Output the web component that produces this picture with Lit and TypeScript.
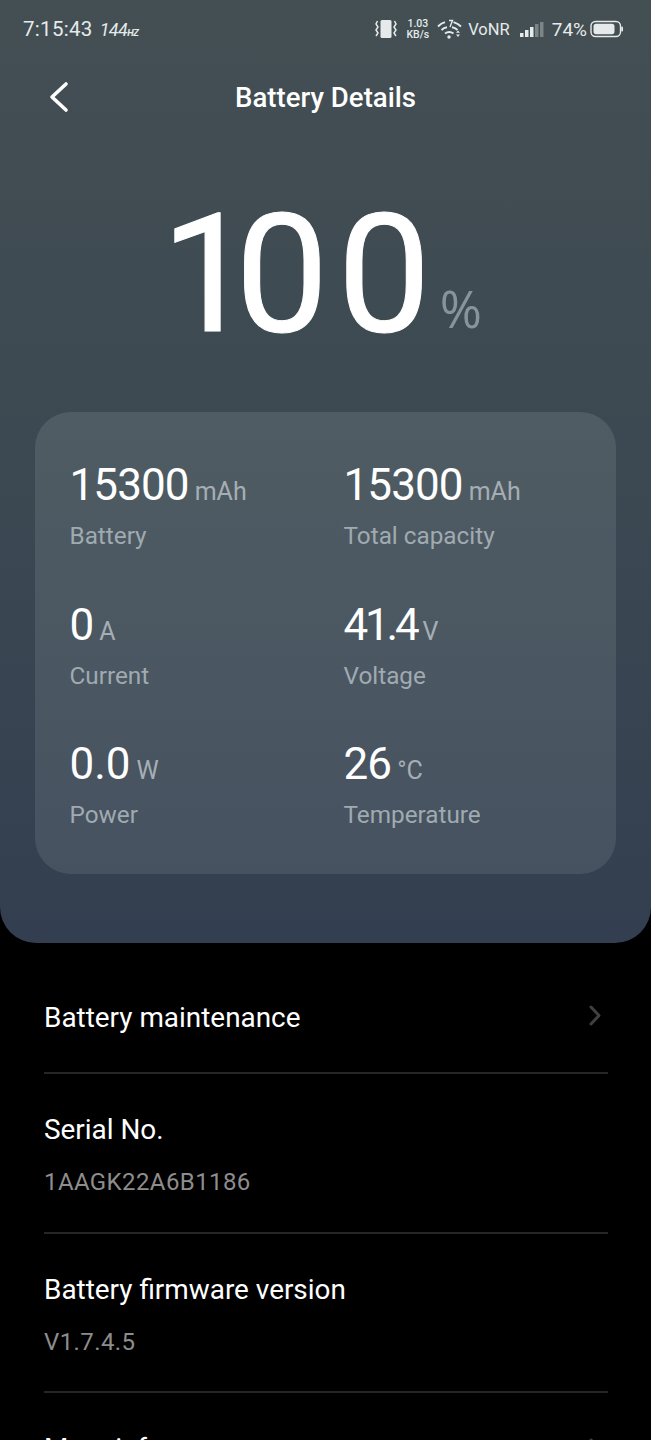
import { LitElement, html, css, svg } from 'lit';
import { customElement } from 'lit/decorators.js';

type Stat = { value: string; unit: string; label: string; track?: number };

const STATS: Stat[] = [
  { value: '15300', unit: 'mAh', label: 'Battery' },
  { value: '15300', unit: 'mAh', label: 'Total capacity' },
  { value: '0', unit: 'A', label: 'Current' },
  { value: '41.4', unit: 'V', label: 'Voltage', track: -3.2 },
  { value: '0.0', unit: 'W', label: 'Power', track: 0 },
  { value: '26', unit: '°C', label: 'Temperature' },
];

const chevron = svg`<path d="M2 2l8 8.5-8 8.5" fill="none" stroke="currentColor" stroke-width="3" stroke-linecap="round" stroke-linejoin="round"/>`;

@customElement('app-root')
export class AppRoot extends LitElement {
  static styles = css`
    :host {
      display: block;
      width: 651px;
      height: 1440px;
      overflow: hidden;
      background: #000;
      color: #fff;
      font-family: Roboto, "Liberation Sans", sans-serif;
    }
    .panel {
      height: 943px;
      box-sizing: border-box;
      border-radius: 0 0 36px 36px;
      background: linear-gradient(180deg, #434f53 0%, #3e4a52 40%, #333f50 100%);
      padding-top: 13px;
      display: flex;
      flex-direction: column;
    }
    .status {
      height: 32px;
      display: flex;
      align-items: center;
      justify-content: space-between;
      padding: 0 28px 0 23px;
      color: #e6eaeb;
    }
    .clock { font-size: 20.5px; display: flex; align-items: baseline; gap: 7px; letter-spacing: 0.3px; }
    .hz { font-size: 18px; font-style: italic; letter-spacing: -0.6px; }
    .hz small { font-size: 9.5px; font-weight: 700; }
    .sys { display: flex; align-items: center; }
    .speed {
      font-size: 10.5px;
      font-weight: 500;
      line-height: 11px;
      text-align: center;
      margin: 0 8px 0 9px;
    }
    .vonr { font-size: 16.5px; margin: 0 10px 0 5px; }
    .pct { font-size: 19px; margin: 0 3px 0 8px; }
    svg { display: block; }
    .nav {
      height: 64px;
      margin-top: 20px;
      position: relative;
      display: flex;
      align-items: center;
      justify-content: center;
      font-size: 27.6px;
      font-weight: 500;
    }
    .back { position: absolute; left: 48px; top: 16px; }
    .big {
      margin-top: 53px;
      height: 230px;
      line-height: 186px;
      text-align: center;
      white-space: nowrap;
      padding-right: 8px;
    }
    .big b {
      font-size: 166px;
      font-weight: 400;
      letter-spacing: 9px;
      -webkit-text-stroke: 1px #fff;
    }
    .big b i { font-style: normal; letter-spacing: -19px; }
    .big .sign {
      font-family: "Open Sans", Roboto, sans-serif;
      font-size: 51px;
      color: #87949b;
      vertical-align: 3px;
    }
    .card {
      margin: 0 35px;
      height: 462px;
      box-sizing: border-box;
      border-radius: 36px;
      background: linear-gradient(180deg, #4f5c63 0%, #4a5661 60%, #465260 100%);
      padding: 47px 0 0 34.500px;
      display: grid;
      grid-template-columns: 274px 1fr;
      grid-auto-rows: 139.5px;
    }
    .val { display: flex; align-items: baseline; height: 52px; line-height: 52px; letter-spacing: -0.9px; }
    .val b { font-size: 44px; font-weight: 400; }
    .val span { font-size: 25px; letter-spacing: 0; color: #a5aeb4; margin-left: 6px; }
    .lab { font-size: 24.3px; line-height: 30px; margin-top: 10px; color: #a0aab1; }
    .list { padding: 0 43px 0 44px; }
    .row { border-bottom: 2px solid #262626; box-sizing: border-box; font-size: 27.900px; }
    .row svg { color: #404040; margin-right: 7px; }
    .row.link {
      height: 131px;
      display: flex;
      align-items: center;
      justify-content: space-between;
      padding-top: 20px;
    }
    .row.link svg { margin-top: -4px; }
    .row.info { height: 159.5px; padding-top: 39px; line-height: 34px; }
    .row.info p { margin: 18px 0 0; color: #8d8d8d; font-size: 24px; line-height: 34px; letter-spacing: 0.4px; }
    .row.last { border: 0; display: flex; justify-content: space-between; }
    .row.last svg { margin-top: 6px; }
  `;

  render() {
    return html`
      <div class="panel">
        <div class="status">
          <div class="clock">7:15:43 <span class="hz">144<small>HZ</small></span></div>
          <div class="sys">
            <svg width="22" height="20" viewBox="0 0 22 20" fill="none" stroke="currentColor" stroke-width="1.5">
              <rect x="5.5" y="1" width="11" height="18" rx="1.5" fill="currentColor" stroke="none"/>
              <path d="M2.5 2L1 5l2 3-2 3 2 3-2 3M19.5 2L21 5l-2 3 2 3-2 3 2 3"/>
            </svg>
            <div class="speed">1.03<br />KB/s</div>
            <svg width="26" height="20" viewBox="0 0 26 20" fill="none" stroke="currentColor" stroke-width="1.9">
              <path d="M1 7.5C3 5.5 5.500 4 8 3.200M16.500 3.200C19 4 22 5.500 24 7.500"/>
              <path d="M4.500 11C6 9.500 8 8.500 10 8.200M15 8.200C17 8.500 19 9.500 20.500 11"/>
              <path d="M8 14.500c2.700-2 5.800-2 8.500 0"/>
              <circle cx="12" cy="18" r="1.700" fill="currentColor" stroke="none"/>
              <path d="M12 1.500h3.500L13 8" stroke-width="1.400"/>
              <path d="M19 13.800h4l-2-2.300zM19 15.500h4l-2 2.500z" fill="currentColor" stroke="none"/>
            </svg>
            <div class="vonr">VoNR</div>
            <svg width="24" height="18" viewBox="0 0 24 18" fill="currentColor">
              <rect x="0" y="13" width="3.500" height="4"/>
              <rect x="5" y="10" width="3.500" height="7"/>
              <rect x="10" y="7" width="3.500" height="10"/>
              <rect x="15" y="4" width="3.500" height="13" opacity=".35"/>
              <rect x="20" y="2" width="3.500" height="15" opacity=".35"/>
            </svg>
            <div class="pct">74%</div>
            <svg width="33" height="18" viewBox="0 0 33 18" fill="none">
              <rect x="1" y="1.500" width="29.500" height="15" rx="4.500" stroke="currentColor" stroke-width="1.400"/>
              <rect x="3.500" y="3.800" width="21" height="10.400" rx="2.600" fill="currentColor"/>
              <rect x="31.200" y="6.500" width="1.800" height="5" rx=".9" fill="currentColor"/>
            </svg>
          </div>
        </div>
        <div class="nav">
          <svg class="back" width="22" height="32" viewBox="0 0 22 32" fill="none" stroke="#fff" stroke-width="3.600" stroke-linecap="round" stroke-linejoin="round">
            <path d="M18 3L4 16l14 13"/>
          </svg>
          Battery Details
        </div>
        <div class="big"><b><i>1</i>00</b><span class="sign">%</span></div>
        <div class="card">
          ${STATS.map(
            (s) => html`<div>
              <div class="val">
                <b style=${s.track === undefined ? '' : `letter-spacing:${s.track}px`}>${s.value}</b><span>${s.unit}</span>
              </div>
              <div class="lab">${s.label}</div>
            </div>`
          )}
        </div>
      </div>
      <div class="list">
        <div class="row link">
          Battery maintenance
          <svg width="12" height="21" viewBox="0 0 12 21">${chevron}</svg>
        </div>
        <div class="row info">Serial No.<p>1AAGK22A6B1186</p></div>
        <div class="row info">Battery firmware version<p>V1.7.4.5</p></div>
        <div class="row info last">
          More info
          <svg width="12" height="21" viewBox="0 0 12 21">${chevron}</svg>
        </div>
      </div>
    `;
  }
}
